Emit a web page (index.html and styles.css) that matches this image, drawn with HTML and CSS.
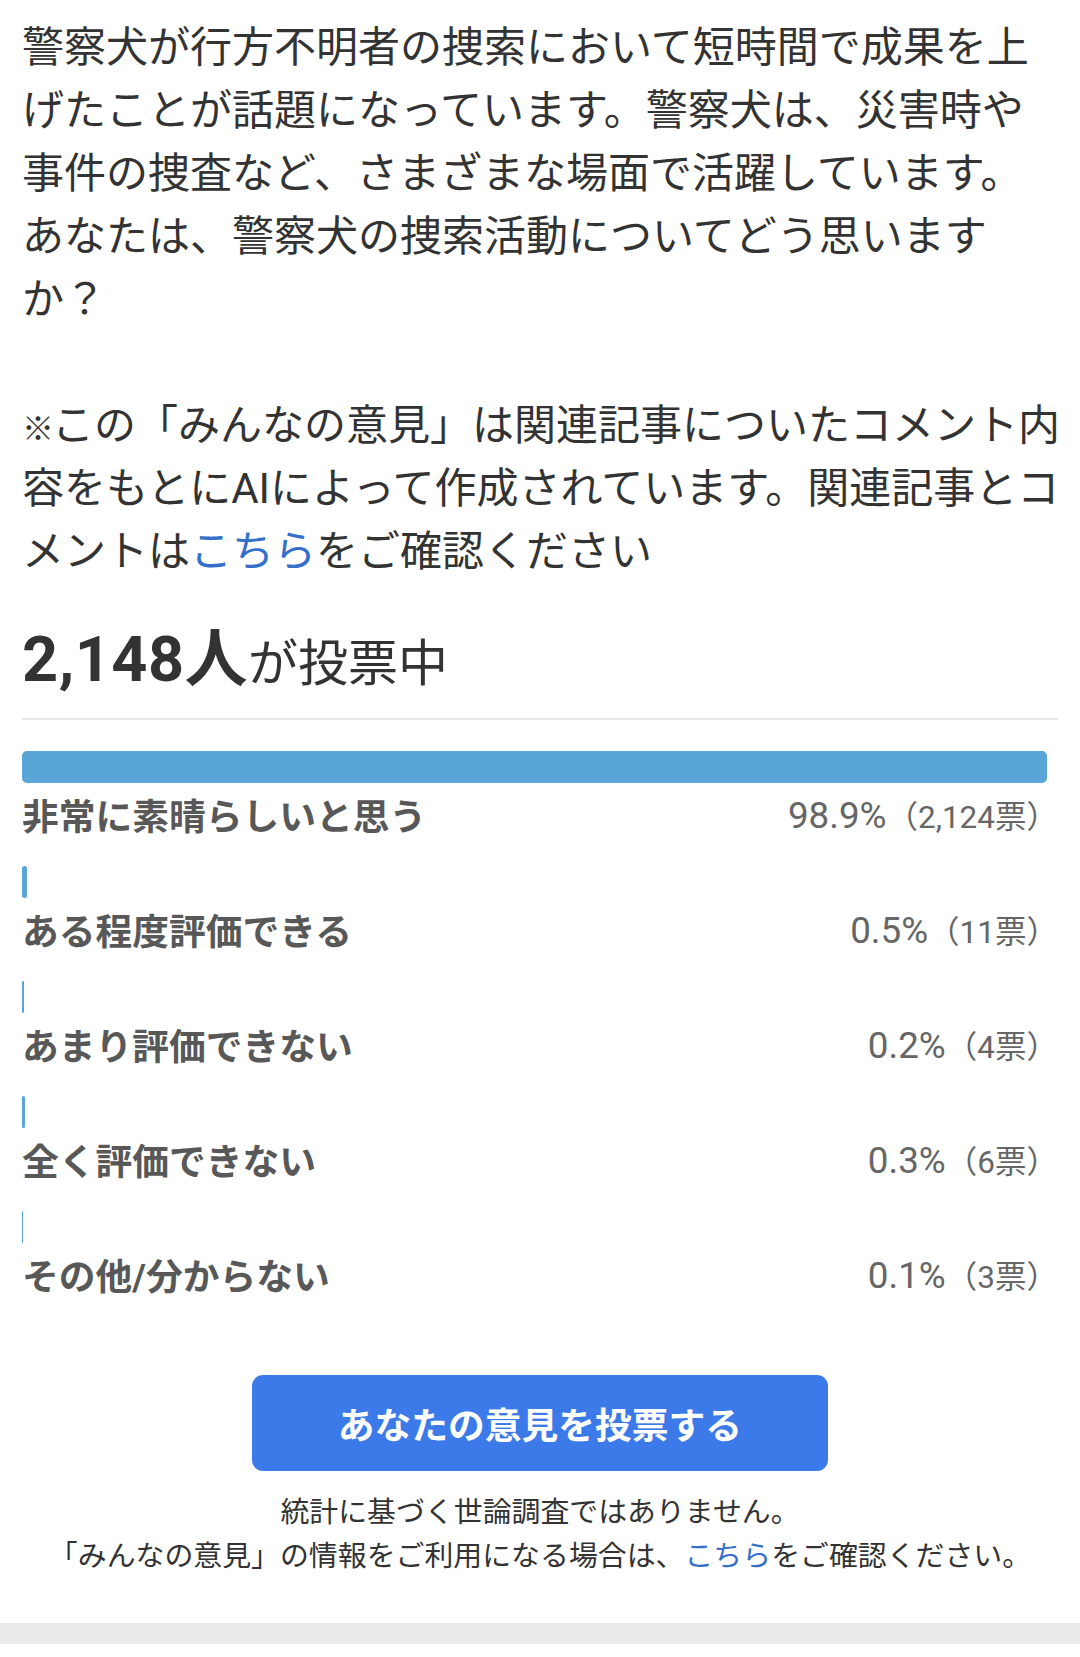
FILE: index.html
```html
<!DOCTYPE html>
<html lang="ja">
<head>
<meta charset="utf-8">
<title>みんなの意見</title>
<link rel="stylesheet" href="styles.css">
</head>
<body>
<main class="page">
  <p class="intro">警察犬が行方不明者の捜索において短時間で成果を上<br>げたことが話題になっています。警察犬は、災害時や<br>事件の捜査など、さまざまな場面で活躍しています。<br>あなたは、警察犬の捜索活動についてどう思います<br>か？<br><br><span class="mark">※</span>この「みんなの意見」は関連記事についたコメント内<br>容をもとにAIによって作成されています。関連記事とコ<br>メントは<a class="link" href="#">こちら</a>をご確認ください</p>

  <h2 class="total"><span class="total-num">2,148人</span><span class="total-suffix">が投票中</span></h2>

  <ul class="results">
    <li class="result">
      <div class="track"><div class="bar" style="width:98.9%"></div></div>
      <div class="result-row"><span class="label">非常に素晴らしいと思う</span><span class="value">98.9%<span class="count">（2,124票）</span></span></div>
    </li>
    <li class="result">
      <div class="track"><div class="bar" style="width:0.5%"></div></div>
      <div class="result-row"><span class="label">ある程度評価できる</span><span class="value">0.5%<span class="count">（11票）</span></span></div>
    </li>
    <li class="result">
      <div class="track"><div class="bar" style="width:0.2%"></div></div>
      <div class="result-row"><span class="label">あまり評価できない</span><span class="value">0.2%<span class="count">（4票）</span></span></div>
    </li>
    <li class="result">
      <div class="track"><div class="bar" style="width:0.3%"></div></div>
      <div class="result-row"><span class="label">全く評価できない</span><span class="value">0.3%<span class="count">（6票）</span></span></div>
    </li>
    <li class="result">
      <div class="track"><div class="bar" style="width:0.1%"></div></div>
      <div class="result-row"><span class="label">その他/分からない</span><span class="value">0.1%<span class="count">（3票）</span></span></div>
    </li>
  </ul>

  <div class="action">
    <a class="vote-btn" href="#">あなたの意見を投票する</a>
  </div>

  <p class="notice">統計に基づく世論調査ではありません。<br>「みんなの意見」の情報をご利用になる場合は、<a class="link" href="#">こちら</a>をご確認ください。</p>
</main>
<div class="band"></div>
</body>
</html>
```

FILE: styles.css
```css
* {
  box-sizing: border-box;
}

html, body {
  margin: 0;
  padding: 0;
  background: #ffffff;
}

body {
  font-family: Roboto, "Noto Sans CJK JP", "Noto Sans", sans-serif;
  color: #333333;
}

.page {
  padding: 16px 22px 0 22px;
}

.intro {
  margin: 0;
  font-size: 42px;
  line-height: 63px;
  font-weight: 400;
  color: #333333;
  white-space: nowrap;
}

.mark {
  font-size: 32px;
  line-height: 1;
  letter-spacing: -2px;
}

.link {
  color: #3470c9;
  text-decoration: none;
}

.total {
  margin: 39px 0 0 0;
  padding-bottom: 16px;
  border-bottom: 2px solid #e8e8e8;
  font-size: 63px;
  line-height: 76px;
  font-weight: 400;
  color: #333333;
}

.total-num {
  font-weight: 700;
  letter-spacing: 0.5px;
}

.total-suffix {
  font-size: 50px;
  font-weight: 400;
}

.results {
  list-style: none;
  margin: 31px 0 0 0;
  padding: 0;
  display: flex;
  flex-direction: column;
  gap: 27px;
}

.track {
  height: 32px;
  width: 100%;
}

.bar {
  height: 100%;
  background: #5aa5d8;
  border-radius: 5px;
  min-width: 1px;
}

.result-row {
  margin-top: 6px;
  height: 50px;
  display: flex;
  align-items: center;
  justify-content: space-between;
}

.label {
  font-size: 36.75px;
  font-weight: 700;
  color: #585858;
}

.value {
  font-size: 36.75px;
  font-weight: 400;
  color: #666666;
}

.count {
  font-size: 31.5px;
}

.action {
  margin-top: 76px;
  display: flex;
  justify-content: center;
}

.vote-btn {
  width: 576px;
  height: 96px;
  border-radius: 11px;
  background: #3d7ae9;
  color: #ffffff;
  font-size: 36.75px;
  font-weight: 700;
  text-decoration: none;
  display: flex;
  align-items: center;
  justify-content: center;
}

.notice {
  margin: 19px 0 0 0;
  font-size: 28.9px;
  line-height: 44px;
  font-weight: 400;
  text-align: center;
  color: #333333;
}

.band {
  margin-top: 45px;
  height: 21px;
  background: #ebebeb;
}
```
